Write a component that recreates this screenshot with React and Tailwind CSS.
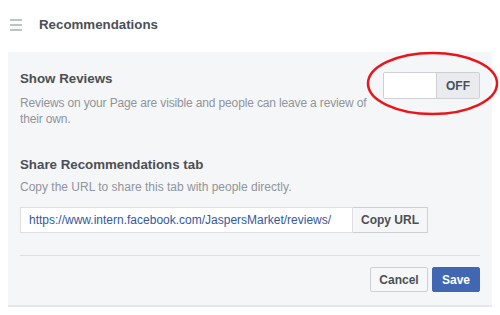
import React from "react";

function Hamburger() {
  return (
    <div className="flex flex-col gap-[3px] w-[12px]">
      <span className="block h-[2px] bg-[#bec2c9]" />
      <span className="block h-[2px] bg-[#bec2c9]" />
      <span className="block h-[2px] bg-[#bec2c9]" />
    </div>
  );
}

function OffToggle() {
  return (
    <div className="flex h-[27px] w-[97px] shrink-0 border border-[#ced0d4] rounded-[2px] overflow-hidden">
      <div className="w-[52px] bg-white" />
      <div className="flex-1 flex items-center justify-center bg-[#e9ebee] border-l border-[#ced0d4] text-[12px] font-bold text-[#4b4f56]">
        OFF
      </div>
    </div>
  );
}

export default function App() {
  return (
    <div
      className="relative w-[500px] h-[315px] bg-white overflow-hidden"
      style={{ fontFamily: '"Liberation Sans", Arial, sans-serif' }}
    >
      <div className="flex items-center h-[52px] pl-[10px] pb-[2px]">
        <Hamburger />
        <h1 className="ml-[17px] text-[13.3px] font-bold text-[#4b4f56]">Recommendations</h1>
      </div>

      <div className="mx-[8px] bg-[#f5f6f7] border-b-2 border-[#e5e6e9] px-[12px] pt-[18px] pb-[13px]">
        <div className="flex justify-between items-start">
          <div className="w-[360px]">
            <h2 className="text-[13.3px] leading-[18px] font-bold text-[#4b4f56]">Show Reviews</h2>
            <p className="mt-[7px] text-[12px] leading-[16px] tracking-[-0.15px] text-[#90949c]">
              Reviews on your Page are visible and people can leave a review of their own.
            </p>
          </div>
          <div className="mt-[2px]">
            <OffToggle />
          </div>
        </div>

        <h2 className="mt-[29px] text-[13.3px] leading-[18px] font-bold text-[#4b4f56]">
          Share Recommendations tab
        </h2>
        <p className="mt-[5px] text-[12px] leading-[16px] text-[#90949c]">
          Copy the URL to share this tab with people directly.
        </p>
        <div className="mt-[12px] flex h-[26px]">
          <div className="w-[333px] flex items-center px-[8px] bg-white border border-[#dddfe2] text-[12px] text-[#365899]">
            https://www.intern.facebook.com/JaspersMarket/reviews/
          </div>
          <button className="w-[75px] border border-l-0 border-[#ced0d4] bg-[#f5f6f7] text-[12px] font-bold text-[#4b4f56]">
            Copy URL
          </button>
        </div>

        <div className="mt-[22px] h-px bg-[#dddfe2]" />

        <div className="mt-[11px] flex justify-end gap-[4px]">
          <button className="h-[25px] w-[58px] rounded-[2px] border border-[#ced0d4] bg-[#f6f7f9] text-[12px] font-bold text-[#4b4f56]">
            Cancel
          </button>
          <button className="h-[25px] w-[48px] rounded-[2px] border border-[#4267b2] bg-[#4267b2] text-[12px] font-bold text-white">
            Save
          </button>
        </div>
      </div>

      <svg
        className="absolute left-[366px] top-[51px] pointer-events-none"
        width="133"
        height="65"
        viewBox="0 0 133 65"
      >
        <ellipse cx="66.5" cy="32.5" rx="64.5" ry="30.5" fill="none" stroke="#e8161b" strokeWidth="2.5" />
      </svg>
    </div>
  );
}
